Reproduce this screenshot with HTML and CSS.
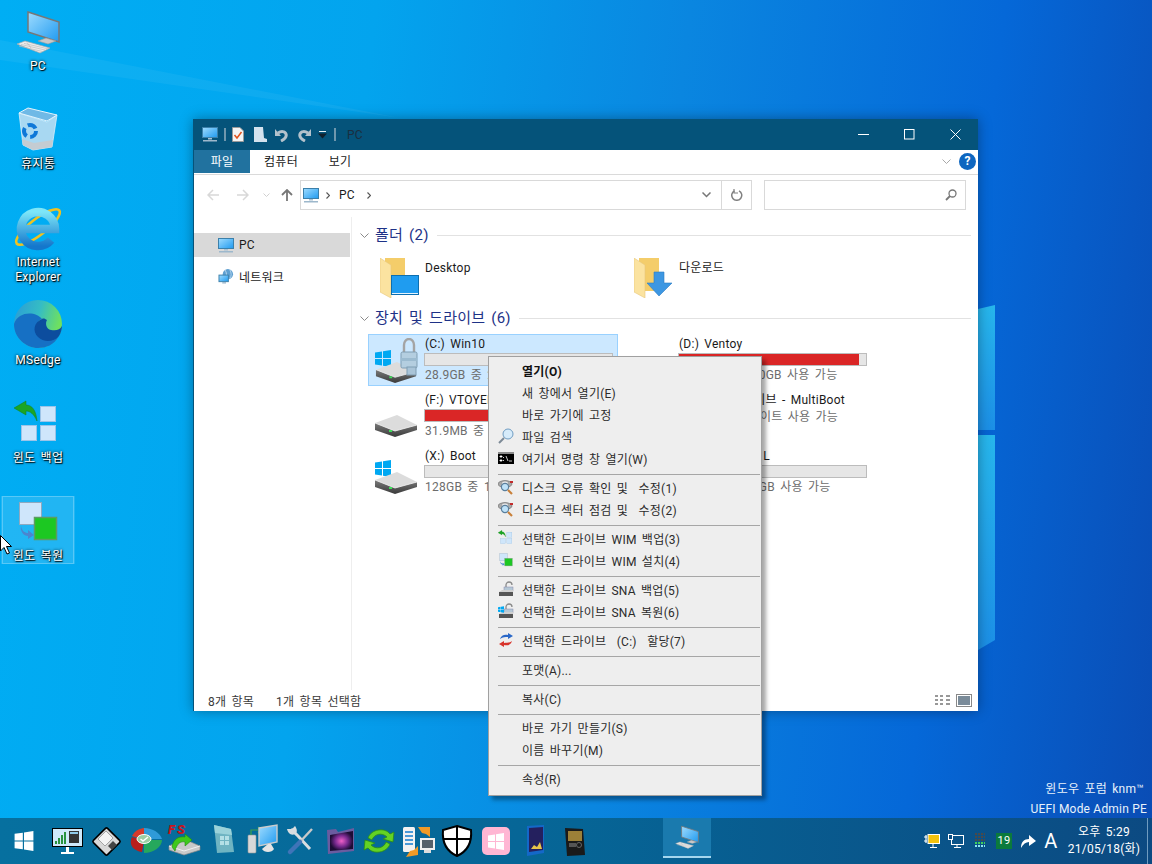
FILE: index.html
```html
<!DOCTYPE html>
<html lang="ko">
<head>
	<meta charset="UTF-8">
	<title>PC</title>
	<link rel="stylesheet" href="styles.css">
</head>
<body>
<!-- shared icons -->
<svg class="defs" aria-hidden="true">
	<defs>
		<linearGradient id="gScreen" x1="0" y1="0" x2="1" y2="1"><stop offset="0" stop-color="#9fdcff"/><stop offset="1" stop-color="#1f9af0"/></linearGradient>
		<linearGradient id="gPane" x1="0" y1="0" x2="0" y2="1"><stop offset="0" stop-color="#27b6ec"/><stop offset="1" stop-color="#1c8fe6"/></linearGradient>
		<linearGradient id="gEdge" x1="0" y1="0" x2="1" y2="0.3"><stop offset="0" stop-color="#2a9ad8"/><stop offset=".55" stop-color="#35bdc4"/><stop offset="1" stop-color="#6fe05f"/></linearGradient>
		<linearGradient id="gIe" x1="0" y1="0" x2="0" y2="1"><stop offset="0" stop-color="#7de6f8"/><stop offset="1" stop-color="#1477cc"/></linearGradient>
		<linearGradient id="gFront" x1="0" y1="0" x2="0" y2="1"><stop offset="0" stop-color="#7a7a7a"/><stop offset="1" stop-color="#3a3a3a"/></linearGradient>
		<radialGradient id="gPurple"><stop offset="0" stop-color="#f060c8"/><stop offset=".55" stop-color="#7a2a90"/><stop offset="1" stop-color="#1c0c34"/></radialGradient>
		<symbol id="i-monitor" viewBox="0 0 16 15">
			<rect x=".5" y=".5" width="15" height="10" fill="url(#gScreen)" stroke="#3c80aa"/>
			<rect x="6" y="11" width="4" height="1.5" fill="#a9c2d4"/>
			<rect x="1" y="13" width="14" height="1.5" fill="#9db8cc"/>
		</symbol>
		<symbol id="i-pc3d" viewBox="0 0 48 48">
			<path d="M14 4L45 14V34L14 24Z" fill="url(#gScreen)" stroke="#777" stroke-width="1.5"/>
			<path d="M24 33L32 30L42 33L34 36Z" fill="#c9c9c9" stroke="#9a9a9a" stroke-width=".6"/>
			<path d="M3 36L11 33L36 40L26 45Z" fill="#ececec" stroke="#a8a8a8" stroke-width=".7"/>
			<path d="M7 36.5L31 42M10 35.4L34 40.8M5 38L28 43.4M13 34.6L17 40" stroke="#bbb" stroke-width=".7" fill="none"/>
		</symbol>
		<symbol id="i-backup" viewBox="0 0 48 48">
			<rect x="26.5" y="6.5" width="15" height="15" fill="#cfe6fb" stroke="#9cc4e8"/>
			<rect x="7.5" y="25.5" width="15" height="15" fill="#cfe6fb" stroke="#9cc4e8"/>
			<rect x="26.5" y="25.5" width="15" height="15" fill="#cfe6fb" stroke="#9cc4e8"/>
			<path d="M0 8L12 1V5C18 5 22 10 23 21C20 14 16 11 12 11V15Z" fill="#1ba524" stroke="#12801a" stroke-width=".5"/>
		</symbol>
		<symbol id="i-restore" viewBox="0 0 48 48">
			<rect x="5.5" y="4.5" width="22" height="22" fill="#cfe6fb" stroke="#8fa9c0"/>
			<rect x="20.5" y="19.5" width="22" height="22" fill="#1cc822" stroke="#5c9c62" stroke-width="1.5"/>
			<path d="M7 28C8 33 11 35 14 35V32L20 37L14 41V38C10 38 6 34 7 28Z" fill="#4a86d0"/>
		</symbol>
		<symbol id="i-drive" viewBox="0 0 42 22">
			<path d="M0 8L22 0L42 10L20 16Z" fill="#dcdcdc"/>
			<path d="M0 8L20 16L42 10V15L20 22L0 15Z" fill="url(#gFront)"/>
			<path d="M0 8L20 16L42 10" fill="none" stroke="#f2f2f2" stroke-width=".8"/>
			<rect x="14" y="15" width="3" height="2" fill="#3fdc5a"/>
		</symbol>
		<symbol id="i-win" viewBox="0 0 16 17">
			<path d="M0 2.4L7 1.4V8H0ZM8 1.2L16 0V8H8ZM0 9H7V15.6L0 14.6ZM8 9H16V17L8 15.8Z"/>
		</symbol>
		<symbol id="i-lock" viewBox="0 0 18 38">
			<path d="M4 16V7A5 6 0 0 1 14 7V16" fill="none" stroke="#a4a4a4" stroke-width="2.4"/>
			<rect x="1" y="14" width="16" height="16" rx="1.5" fill="#b4cee0" stroke="#7f9db3"/>
			<rect x="1" y="20" width="16" height="3" fill="#9cbbd0"/>
			<rect x="7" y="29" width="9" height="8" fill="#a9c4d8" stroke="#7f9db3"/>
		</symbol>
		<symbol id="i-folder" viewBox="0 0 40 40">
			<path d="M5 0H25V33H5Z" fill="#f4cd6a"/>
			<path d="M0 0L11 7V40L0 34Z" fill="#fbe3a0" stroke="#e7c77c" stroke-width=".6"/>
		</symbol>
		<symbol id="i-check" viewBox="0 0 16 16">
			<ellipse cx="7" cy="5" rx="7" ry="3.4" fill="#a9a9a9" stroke="#666" stroke-width=".6"/>
			<ellipse cx="7" cy="4" rx="3.4" ry="2" fill="#ececec" stroke="#777" stroke-width=".5"/>
			<rect x="12" y="2" width="3" height="2" fill="#c22c2c"/>
			<circle cx="7" cy="8" r="3.6" fill="#bfe2f8" stroke="#5a7f9d" stroke-width="1.2"/>
			<path d="M10 11L14 15" stroke="#c9803a" stroke-width="2.2"/>
		</symbol>
		<symbol id="i-padlock" viewBox="0 0 16 16">
			<path d="M8 7V4A3 3 0 0 1 14 4" fill="none" stroke="#8a8a8a" stroke-width="1.3"/>
			<rect x="6" y="6" width="9" height="4" fill="#b5c8d6" stroke="#88a" stroke-width=".5"/>
			<path d="M1 11H15V15H1Z" fill="#555"/>
			<path d="M1 11L4 9H15V11Z" fill="#cfcfcf"/>
		</symbol>
	</defs>
</svg>

<div class="desktop">
	<div class="workarea">
		<svg class="wallpaper" viewBox="0 0 1152 818" aria-hidden="true">
			<path d="M0 40L400 118L0 60Z" fill="#fff" opacity=".05"/>
			<path d="M978 309L995 305V430H978Z" fill="url(#gPane)"/>
			<path d="M978 435H995V640L978 650Z" fill="url(#gPane)"/>
		</svg>

		<div class="icons">
			<div class="dicon">
				<svg class="dicon-img"><use href="#i-pc3d"/></svg>
				<div class="dicon-label">PC</div>
			</div>
			<div class="dicon">
				<svg class="dicon-img" viewBox="0 0 48 48">
					<path d="M5 7L9 39L19 44L38 41L43 9L33 16Z" fill="#a8d8f2" stroke="#d8eefb" stroke-width=".8"/>
					<path d="M7.800 33L9 39L19 44L38 41L39 34L20 37Z" fill="#c4ccd2"/>
					<path d="M5 7L14 2L43 9L33 15Z" fill="#6fb9e6" stroke="#e4f4fd" stroke-width="1"/>
					<circle cx="16" cy="25" r="6" fill="none" stroke="#0e78d8" stroke-width="4" stroke-dasharray="9 3.600"/>
				</svg>
				<div class="dicon-label">휴지통</div>
			</div>
			<div class="dicon">
				<svg class="dicon-img" viewBox="0 0 48 48">
					<ellipse cx="24" cy="23" rx="27" ry="8" transform="rotate(-38 24 23)" fill="none" stroke="#f0c220" stroke-width="2.600"/>
					<path d="M7 25H41A17 17 0 1 0 37 36" fill="none" stroke="url(#gIe)" stroke-width="8.500"/>
				</svg>
				<div class="dicon-label">Internet Explorer</div>
			</div>
			<div class="dicon">
				<svg class="dicon-img" viewBox="0 0 48 48">
					<circle cx="24" cy="22" r="24" fill="url(#gEdge)"/>
					<path d="M0 22C0 36 12 46 24 46C32 46 40 43 45 34C40 37 30 37 25 32C20 27 22 19 28 17C22 9 4 9 0 22Z" fill="#1670c4"/>
					<path d="M28 17C20 20 18 29 24 35C30 41 40 40 45 34C47 31 48 26 48 24C46 28 42 29 37 28C32 27 31 21 33 18C31 17 30 16 28 17Z" fill="#0c4d9e"/>
				</svg>
				<div class="dicon-label">MSedge</div>
			</div>
			<div class="dicon">
				<svg class="dicon-img"><use href="#i-backup"/></svg>
				<div class="dicon-label">윈도 백업</div>
			</div>
			<div class="dicon dicon-sel">
				<svg class="dicon-img"><use href="#i-restore"/></svg>
				<div class="dicon-label">윈도 복원</div>
			</div>
		</div>

		<div class="watermark">
			<div class="wm-top">윈도우 포럼 knm™</div>
			<div class="wm-bottom">UEFI Mode Admin PE</div>
		</div>

		<div class="window">
			<div class="titlebar">
				<svg class="qa qa-pc"><use href="#i-monitor"/></svg>
				<span class="qa-sep qa-sep1"></span>
				<svg class="qa qa-doc" viewBox="0 0 12 15">
					<path d="M.5.5H8L11.500 4V14.500H.5Z" fill="#f4f4f4" stroke="#999"/>
					<path d="M2.500 8L5 11L9.500 5" fill="none" stroke="#e0521c" stroke-width="1.5"/>
				</svg>
				<svg class="qa qa-page" viewBox="0 0 13 15">
					<path d="M0 0H9L10 11L13 12V15H0Z" fill="#d4e2ee"/>
				</svg>
				<svg class="qa qa-undo" viewBox="0 0 13 14">
					<path d="M6 13C10 11 12 9 11 6C10 3 6 3 3 5" fill="none" stroke="#b4c2cc" stroke-width="3"/>
					<path d="M0 1V8H6Z" fill="#b4c2cc"/>
				</svg>
				<svg class="qa qa-redo" viewBox="0 0 13 14">
					<path d="M7 13C3 11 1 9 2 6C3 3 7 3 10 5" fill="none" stroke="#b4c2cc" stroke-width="3"/>
					<path d="M13 1V8H7Z" fill="#b4c2cc"/>
				</svg>
				<svg class="qa qa-drop" viewBox="0 0 9 8">
					<rect x="1" y="0" width="7" height="1" fill="#e8eef2"/>
					<path d="M0 2.500H9L4.500 7.500Z" fill="#10202c"/>
				</svg>
				<span class="qa-sep qa-sep2"></span>
				<span class="title-text">PC</span>
				<div class="winbtns">
					<span class="winbtn">
						<svg width="11" height="11" viewBox="0 0 11 11"><path d="M0 5.500H11" stroke="#fff"/></svg>
					</span>
					<span class="winbtn">
						<svg width="11" height="11" viewBox="0 0 11 11"><rect x=".5" y=".5" width="9.500" height="9.500" fill="none" stroke="#fff"/></svg>
					</span>
					<span class="winbtn">
						<svg width="11" height="11" viewBox="0 0 11 11"><path d="M.5.5L10.500 10.500M10.500.5L.5 10.500" stroke="#fff"/></svg>
					</span>
				</div>
			</div>

			<div class="ribbon">
				<span class="tab tab-file">파일</span>
				<span class="tab">컴퓨터</span>
				<span class="tab">보기</span>
				<svg class="rib-chev" viewBox="0 0 9 5"><path d="M.5.5L4.500 4.500L8.500.5" fill="none" stroke="#a8a8a8"/></svg>
				<span class="help">?</span>
			</div>

			<div class="addressrow">
				<svg class="nav-arrow" viewBox="0 0 12 12"><path d="M12 6H1M6 1L1 6L6 11" fill="none" stroke="#d8d8d8" stroke-width="1.500"/></svg>
				<svg class="nav-arrow nav-fwd" viewBox="0 0 12 12"><path d="M0 6H11M6 1L11 6L6 11" fill="none" stroke="#d8d8d8" stroke-width="1.500"/></svg>
				<svg class="nav-drop" viewBox="0 0 7 4"><path d="M.5.5L3.500 3.500L6.500.5" fill="none" stroke="#d0d0d0"/></svg>
				<svg class="nav-arrow nav-up" viewBox="0 0 12 12"><path d="M6 12V1M1 6L6 1L11 6" fill="none" stroke="#777" stroke-width="1.800"/></svg>
				<div class="addrbox">
					<svg class="addr-pc"><use href="#i-monitor"/></svg>
					<svg class="crumb" viewBox="0 0 4 7"><path d="M.5.5L3.500 3.500L.5 6.500" fill="none" stroke="#555" stroke-width="1.200"/></svg>
					<span class="addr-text">PC</span>
					<svg class="crumb" viewBox="0 0 4 7"><path d="M.5.5L3.500 3.500L.5 6.500" fill="none" stroke="#555" stroke-width="1.200"/></svg>
					<svg class="addr-drop" viewBox="0 0 9 6"><path d="M.5.5L4.500 4.500L8.500.5" fill="none" stroke="#777" stroke-width="1.500"/></svg>
					<span class="addr-refresh">
						<svg width="12" height="12" viewBox="0 0 12 12"><path d="M3.500 1.800A5 5 0 1 0 8 1.800" fill="none" stroke="#808080" stroke-width="1.500"/><path d="M3 0V4H7" fill="none" stroke="#808080" stroke-width="1.200"/></svg>
					</span>
				</div>
				<div class="searchbox">
					<svg width="12" height="12" viewBox="0 0 12 12"><circle cx="7.500" cy="4.500" r="3.500" fill="none" stroke="#777" stroke-width="1.300"/><path d="M5 7L1 11" stroke="#777" stroke-width="1.800"/></svg>
				</div>
			</div>

			<div class="main">
				<div class="navpane">
					<div class="nav-row nav-sel">
						<svg class="nav-icon"><use href="#i-monitor"/></svg>
						<span>PC</span>
					</div>
					<div class="nav-row nav-net">
						<svg class="nav-icon" viewBox="0 0 16 16">
							<circle cx="10" cy="5.500" r="5.500" fill="#5e9fd0"/>
							<path d="M7 1C9 4 9 8 7 10M12 .5C14 4 14 8 12 10" fill="none" stroke="#cfe6f7" stroke-width=".8"/>
							<rect x=".5" y="6.500" width="10" height="7" fill="url(#gScreen)" stroke="#3c80aa"/>
							<rect x="4" y="14" width="4" height="1.500" fill="#9db8cc"/>
						</svg>
						<span>네트워크</span>
					</div>
				</div>

				<div class="content">
					<div class="sec-head">
						<svg class="sec-chev" viewBox="0 0 9 5"><path d="M.5.5L4.500 4.500L8.500.5" fill="none" stroke="#8a8a8a"/></svg>
						<span class="sec-title">폴더 (2)</span>
						<span class="sec-line"></span>
					</div>
					<div class="folders">
						<div class="tile tile-folder">
							<svg class="folder-img" viewBox="0 0 40 40">
								<use href="#i-folder" width="40" height="40"/>
								<rect x="11.500" y="17.500" width="27" height="19" fill="#1f9cf0" stroke="#0d6fb0"/>
								<rect x="12" y="35" width="26" height="1" fill="#e7f4fd"/>
							</svg>
							<span class="folder-name">Desktop</span>
						</div>
						<div class="tile tile-folder">
							<svg class="folder-img" viewBox="0 0 40 40">
								<use href="#i-folder" width="40" height="40"/>
								<path d="M20 14H30V25H38L25 38L13 25H20Z" fill="#3d97e2" stroke="#2c7cc4" stroke-width=".6"/>
							</svg>
							<span class="folder-name">다운로드</span>
						</div>
					</div>

					<div class="sec-head">
						<svg class="sec-chev" viewBox="0 0 9 5"><path d="M.5.5L4.500 4.500L8.500.5" fill="none" stroke="#8a8a8a"/></svg>
						<span class="sec-title">장치 및 드라이브 (6)</span>
						<span class="sec-line"></span>
					</div>
					<div class="drives">
						<div class="tile tile-drive tile-sel">
							<svg class="drive-img" viewBox="0 0 48 50">
								<use href="#i-win" x="3" y="15" width="16" height="17" fill="#00a8f2"/>
								<use href="#i-drive" x="3" y="27" width="42" height="21"/>
								<use href="#i-lock" x="28" y="3" width="18" height="38"/>
							</svg>
							<div class="drive-info">
								<div class="drive-name">(C:) Win10</div>
								<div class="bar"></div>
								<div class="drive-sub">28.9GB 중 27.5GB 사용 가능</div>
							</div>
						</div>
						<div class="tile tile-drive">
							<svg class="drive-img" viewBox="0 0 48 50"></svg>
							<div class="drive-info">
								<div class="drive-name">(D:) Ventoy</div>
								<div class="bar"><div class="bar-fill" style="width:96.500%"></div></div>
								<div class="drive-sub">58.8GB 중 1.80GB 사용 가능</div>
							</div>
						</div>
						<div class="tile tile-drive">
							<svg class="drive-img" viewBox="0 0 48 50">
								<use href="#i-drive" x="3" y="24" width="42" height="22"/>
							</svg>
							<div class="drive-info">
								<div class="drive-name">(F:) VTOYEFI</div>
								<div class="bar"><div class="bar-fill" style="width:96%"></div></div>
								<div class="drive-sub">31.9MB 중 1.20MB 사용 가능</div>
							</div>
						</div>
						<div class="tile tile-drive">
							<svg class="drive-img" viewBox="0 0 48 50"></svg>
							<div class="drive-info">
								<div class="drive-name">(E:) USB 드라이브 - MultiBoot</div>
								<div class="drive-sub">0바이트 중 0바이트 사용 가능</div>
							</div>
						</div>
						<div class="tile tile-drive">
							<svg class="drive-img" viewBox="0 0 48 50">
								<use href="#i-win" x="3" y="13" width="16" height="17" fill="#00a8f2"/>
								<use href="#i-drive" x="3" y="25" width="42" height="22"/>
							</svg>
							<div class="drive-info">
								<div class="drive-name">(X:) Boot</div>
								<div class="bar"></div>
								<div class="drive-sub">128GB 중 125GB 사용 가능</div>
							</div>
						</div>
						<div class="tile tile-drive">
							<svg class="drive-img" viewBox="0 0 48 50"></svg>
							<div class="drive-info">
								<div class="drive-name">(Y:) LocalDisk L</div>
								<div class="bar"></div>
								<div class="drive-sub">116GB 중 115GB 사용 가능</div>
							</div>
						</div>
					</div>
				</div>
			</div>

			<div class="statusbar">
				<span class="st-count">8개 항목</span>
				<span>1개 항목 선택함</span>
				<svg class="st-view" viewBox="0 0 17 13"><path d="M1 2H4M1 6H4M1 10H4M6 2H9M6 6H9M6 10H9M12 2H16M12 6H16M12 10H16" stroke="#777" stroke-width="1.500"/></svg>
				<svg class="st-view st-large" viewBox="0 0 16 13"><rect x=".5" y=".5" width="15" height="12" fill="#fff" stroke="#888"/><rect x="2" y="2" width="12" height="9" fill="#7a8b99"/></svg>
			</div>
		</div>

		<div class="menu">
			<div class="mi mi-bold"><span class="mi-ic"></span>열기(O)</div>
			<div class="mi"><span class="mi-ic"></span>새 창에서 열기(E)</div>
			<div class="mi"><span class="mi-ic"></span>바로 가기에 고정</div>
			<div class="mi">
				<svg class="mi-ic" viewBox="0 0 16 16"><path d="M6 10L1 15" stroke="#7c8a96" stroke-width="2"/><circle cx="10" cy="6" r="5" fill="#d6ebfa" stroke="#6f9cc2"/></svg>
				파일 검색
			</div>
			<div class="mi">
				<svg class="mi-ic" viewBox="0 0 16 16"><rect y="2" width="16" height="12" fill="#000"/><rect y="2" width="16" height="2" fill="#8a8a8a"/><path d="M2 6H4V7H2ZM2 10H4V11H2ZM5.500 7V8M5.500 10V11M8 6L10 11M11 11H14" stroke="#fff" stroke-width=".8" fill="#fff"/></svg>
				여기서 명령 창 열기(W)
			</div>
			<div class="mi-sep"></div>
			<div class="mi"><svg class="mi-ic"><use href="#i-check"/></svg>디스크 오류 확인 및 &nbsp;수정(1)</div>
			<div class="mi"><svg class="mi-ic"><use href="#i-check"/></svg>디스크 섹터 점검 및 &nbsp;수정(2)</div>
			<div class="mi-sep"></div>
			<div class="mi"><svg class="mi-ic"><use href="#i-backup"/></svg>선택한 드라이브 WIM 백업(3)</div>
			<div class="mi"><svg class="mi-ic"><use href="#i-restore"/></svg>선택한 드라이브 WIM 설치(4)</div>
			<div class="mi-sep"></div>
			<div class="mi"><svg class="mi-ic"><use href="#i-padlock"/></svg>선택한 드라이브 SNA 백업(5)</div>
			<div class="mi">
				<svg class="mi-ic" viewBox="0 0 16 16"><use href="#i-padlock" width="16" height="16"/><use href="#i-win" x="0" y="3" width="6" height="7" fill="#00a8f2"/></svg>
				선택한 드라이브 SNA 복원(6)
			</div>
			<div class="mi-sep"></div>
			<div class="mi">
				<svg class="mi-ic" viewBox="0 0 16 16"><path d="M2 7C3 3 7 2 10 3V1L15 4L10 7V5C7 5 5 5 2 7Z" fill="#2a68c8"/><path d="M14 9C13 13 9 14 6 13V15L1 12L6 9V11C9 11 11 11 14 9Z" fill="#d8342c"/></svg>
				선택한 드라이브 &nbsp;(C:)&nbsp; 할당(7)
			</div>
			<div class="mi-sep"></div>
			<div class="mi"><span class="mi-ic"></span>포맷(A)...</div>
			<div class="mi-sep"></div>
			<div class="mi"><span class="mi-ic"></span>복사(C)</div>
			<div class="mi-sep"></div>
			<div class="mi"><span class="mi-ic"></span>바로 가기 만들기(S)</div>
			<div class="mi"><span class="mi-ic"></span>이름 바꾸기(M)</div>
			<div class="mi-sep"></div>
			<div class="mi"><span class="mi-ic"></span>속성(R)</div>
		</div>

		<svg class="cursor" viewBox="0 0 12 20"><path d="M.5.5V16L4 12.500L7 19L9.500 18L6.500 11.500H11.500Z" fill="#fff" stroke="#000"/></svg>
	</div>

	<div class="taskbar">
		<div class="tb-start"><svg class="tb-win"><use href="#i-win"/></svg></div>
		<div class="tb-item">
			<svg viewBox="0 0 32 32">
				<rect x="1.500" y="3.500" width="30" height="18" fill="#cfe9fa" stroke="#000"/>
				<path d="M5 19V16M8 19V13M11 19V10M14 19V7" stroke="#178a2c" stroke-width="1.800"/>
				<rect x="18" y="6" width="10" height="12" fill="#333"/>
				<rect x="19" y="7" width="8" height="2" fill="#8fc9e8"/>
				<rect x="15" y="22" width="3" height="5" fill="#fff"/>
				<rect x="10" y="27" width="13" height="2" fill="#fff"/>
			</svg>
		</div>
		<div class="tb-item">
			<svg viewBox="0 0 32 32">
				<rect x="6.500" y="6.500" width="20" height="20" rx="1.500" transform="rotate(45 16.500 16.500)" fill="#d8d8d8" stroke="#000" stroke-width="1.600"/>
				<path d="M8 14L16 6L23 13L15 21Z" fill="#f4f4f4" stroke="#777" stroke-width=".6"/>
				<path d="M18 21L23 16L27 20L22 25Z" fill="#444"/>
			</svg>
		</div>
		<div class="tb-item">
			<svg viewBox="0 0 32 32">
				<path d="M15 15L3 11C6 5 12 3 16 3Z" fill="#d63a2a"/>
				<path d="M15 15L3 12C-1 20 5 26 13 27Z" fill="#b81e1c"/>
				<path d="M15 14V3C24 3 31 8 33 14Z" fill="#2f9ad8"/>
				<path d="M15 15H33C33 22 24 28 15 28Z" fill="#26a85c"/>
				<ellipse cx="15" cy="14" rx="7" ry="4.500" fill="#9ccfa4" stroke="#fff"/>
				<path d="M11.500 14L14 16L19 12" fill="none" stroke="#fff" stroke-width="1.500"/>
			</svg>
		</div>
		<div class="tb-item tb-fs">
			<svg viewBox="0 0 32 32">
				<text class="fs-text" x="0" y="9">FS</text>
				<path d="M1 21L16 14L32 21V25L16 30L1 25Z" fill="#c9c9c9" stroke="#888" stroke-width=".7"/>
				<path d="M1 21L16 26L32 21" fill="none" stroke="#f0f0f0"/>
				<path d="M4 22C5 14 11 11 17 12V9L24 15L17 21V17C13 16 9 18 7 26Z" fill="#3fc81c" stroke="#1f8a10" stroke-width=".6"/>
			</svg>
		</div>
		<div class="tb-item">
			<svg viewBox="0 0 32 32">
				<path d="M7 0L24 4L27 27L10 28Z" fill="#6fb4c2"/>
				<path d="M7 0L24 4L25 10L8 8Z" fill="#9ad2da"/>
				<path d="M13 11H17V15H13ZM18 11H22V15H18ZM13 16H17V20H13ZM18 16H22V20H18Z" fill="#b4e0e6"/>
			</svg>
		</div>
		<div class="tb-item">
			<svg viewBox="0 0 32 32">
				<rect x="2" y="10" width="8" height="18" rx="1" fill="#d8d8d8" stroke="#999" stroke-width=".6"/>
				<path d="M5 10V5H12M12 2L15 5L12 8" fill="none" stroke="#3fa04a" stroke-width="1.200"/>
				<path d="M13 3L31 0V17L13 21Z" fill="url(#gScreen)" stroke="#ccc" stroke-width="1.400"/>
				<path d="M16 24L22 19L25 19L28 24C26 28 18 28 16 24Z" fill="#e4e4e4"/>
			</svg>
		</div>
		<div class="tb-item">
			<svg viewBox="0 0 32 32">
				<path d="M6 4L13 11L25 24" stroke="#d8dde0" stroke-width="3" fill="none"/>
				<path d="M2 4C3 8 6 11 10 9C13 7 12 4 10 1L7 4Z" fill="#d8dde0"/>
				<path d="M27 4L14 18" stroke="#c8c8c8" stroke-width="2.400"/>
				<path d="M15 17L5 27" stroke="#3f74b8" stroke-width="4.500" stroke-linecap="round"/>
			</svg>
		</div>
		<div class="tb-item">
			<svg viewBox="0 0 32 32">
				<path d="M3 5L12 4L14 7L30 3V26L4 29Z" fill="#6a5ca0"/>
				<path d="M6 10L29 6V24L6 26Z" fill="url(#gPurple)"/>
			</svg>
		</div>
		<div class="tb-item">
			<svg viewBox="0 0 32 32">
				<path d="M5 13C8 4 22 2 27 9L31 7L30 17L20 14L24 12C19 7 11 9 9 15Z" fill="#63d224" stroke="#2a8a18" stroke-width=".8"/>
				<path d="M27 19C24 28 10 30 5 23L1 25L2 15L12 18L8 20C13 25 21 23 23 17Z" fill="#63d224" stroke="#2a8a18" stroke-width=".8"/>
			</svg>
		</div>
		<div class="tb-item">
			<svg viewBox="0 0 32 32">
				<rect x="1" y="2" width="12" height="25" rx="1.500" fill="#f2f2f2"/>
				<path d="M3 7H11M3 11H11M3 15H11M3 19H11" stroke="#4a9ad8" stroke-width="1.800"/>
				<rect x="18" y="13" width="15" height="12" fill="#f0f0f0"/>
				<rect x="20" y="15" width="11" height="8" fill="#55606a"/>
				<rect x="22" y="25" width="7" height="3" fill="#ddd"/>
				<path d="M16 2H28V12L24 9L20 8Z" fill="#f09a26"/>
				<path d="M4 32L16 30V21L12 25L8 26Z" fill="#f09a26"/>
			</svg>
		</div>
		<div class="tb-item">
			<svg viewBox="0 0 32 32">
				<path d="M16 1L30 5C31 16 27 26 16 31C5 26 1 16 2 5Z" fill="#fff" stroke="#000" stroke-width="2"/>
				<path d="M16 2V30M2 14H30" stroke="#000" stroke-width="2"/>
			</svg>
		</div>
		<div class="tb-item">
			<svg viewBox="0 0 32 32">
				<rect x="2" y="2" width="28" height="28" rx="5" fill="#ffb6d3"/>
				<use href="#i-win" x="8" y="8" width="16" height="17" fill="#fff"/>
			</svg>
		</div>
		<div class="tb-item">
			<svg viewBox="0 0 32 32">
				<path d="M8 1L25 0V28L8 31Z" fill="#1468c8"/>
				<path d="M10 3L24 2V25L10 27Z" fill="#24205e"/>
				<path d="M12 24L15 20L18 22L21 17L23 24Z" fill="#e8c54a"/>
			</svg>
		</div>
		<div class="tb-item">
			<svg viewBox="0 0 32 32">
				<path d="M7 3L25 4L27 30L9 31Z" fill="#1a1a1a"/>
				<rect x="10" y="6" width="14" height="10" fill="#9c8038"/>
				<rect x="11" y="18" width="7" height="4" fill="#555"/>
				<circle cx="21" cy="20" r="2.500" fill="none" stroke="#666"/>
			</svg>
		</div>
		<div class="tb-task"><svg class="tb-task-ic"><use href="#i-pc3d"/></svg></div>

		<div class="tray">
			<svg class="tray-ic" viewBox="0 0 16 16">
				<path d="M0 4H3M0 8H3M2 2V10" stroke="#fff" stroke-width="1.200"/>
				<rect x="4" y="1.500" width="11.500" height="9" fill="#f4c20d" stroke="#fff"/>
				<path d="M9 11V14M6 14.500H13" stroke="#fff"/>
			</svg>
			<svg class="tray-ic" viewBox="0 0 16 16">
				<rect x="3.500" y="2.500" width="12" height="9" fill="none" stroke="#fff"/>
				<rect x=".5" y="1.500" width="4" height="5" fill="#0c4e84" stroke="#fff"/>
				<path d="M9 12V14M6 14.500H13" stroke="#fff"/>
			</svg>
			<svg class="tray-ic" viewBox="0 0 16 16">
				<path d="M3 1H13M3 4H13M3 7H13" stroke="#4a4a4a" stroke-width="2" stroke-dasharray="2 1"/>
				<path d="M3 10H13" stroke="#3fd05a" stroke-width="2" stroke-dasharray="2 1"/>
				<path d="M3 13H13" stroke="#8fe6f0" stroke-width="2" stroke-dasharray="2 1"/>
			</svg>
			<span class="tray-num">19</span>
			<svg class="tray-ic" viewBox="0 0 16 16"><path d="M1 15C1 9 4 6 9 6V2L16 8L9 13V9C6 9 3 11 1 15Z" fill="#fff"/></svg>
			<span class="tray-a">A</span>
			<div class="clock">
				<div>오후 5:29</div>
				<div>21/05/18(화)</div>
			</div>
		</div>
	</div>
</div>
</body>
</html>
```

FILE: styles.css
```css
*{
	margin: 0;
	padding: 0;
	box-sizing: border-box;
}
html,body{
	width: 1152px;
	height: 864px;
	overflow: hidden;
}
body{
	font-family: Roboto, "Noto Sans CJK KR", sans-serif;
	font-size: 12px;
	letter-spacing: .25px;
	word-spacing: 2px;
	color: #1a1a1a;
}
.defs{
	position: absolute;
	width: 0;
	height: 0;
}
.desktop{
	display: flex;
	flex-direction: column;
	width: 1152px;
	height: 864px;
	background: linear-gradient(97deg, #00aef4 0%, #03a4ee 30%, #0a86e0 55%, #0568d8 80%, #0a4cb4 100%);
}
.workarea{
	position: relative;
	flex: 1;
}
.wallpaper{
	position: absolute;
	left: 0;
	top: 0;
	width: 100%;
	height: 100%;
}

/* desktop icons */
.icons{
	position: relative;
	display: flex;
	flex-direction: column;
	gap: 30px;
	width: 74px;
	margin-left: 1px;
	padding-top: 6px;
}
.dicon{
	height: 68px;
	padding-top: 2px;
	border: 1px solid transparent;
	border-width: 0 1px;
	text-align: center;
}
.dicon-sel{
	background: rgba(255,255,255,.13);
	box-shadow: inset 0 0 0 1px rgba(255,255,255,.25);
}
.dicon-img{
	display: block;
	width: 48px;
	height: 48px;
	margin-left: 12px;
	overflow: visible;
}
.dicon-label{
	margin-top: 3px;
	line-height: 15px;
	color: #fff;
	text-shadow: 1px 1px 1px #000, 0 0 3px #000;
}

.watermark{
	position: absolute;
	right: 5px;
	bottom: -1px;
	line-height: 20px;
	text-align: right;
	color: #e8f2fb;
}
.wm-top{
	padding-right: 3px;
}
.wm-bottom{
	letter-spacing: .2px;
	word-spacing: 0;
}

/* explorer window */
.window{
	position: absolute;
	left: 193px;
	top: 119px;
	display: flex;
	flex-direction: column;
	width: 785px;
	height: 592px;
	background: #fff;
	box-shadow: 0 0 12px rgba(0,0,0,.35);
	border-left: 1px solid #05537a;
}
.titlebar{
	display: flex;
	align-items: center;
	flex: none;
	height: 31px;
	padding-left: 8px;
	background: #05537a;
}
.qa{
	display: block;
	flex: none;
}
.qa-pc{width: 16px;height: 15px;}
.qa-doc{width: 12px;height: 15px;margin-left: 6px;}
.qa-page{width: 13px;height: 15px;margin-left: 10px;}
.qa-undo{width: 13px;height: 14px;margin-left: 8px;}
.qa-redo{width: 13px;height: 14px;margin-left: 10px;}
.qa-drop{width: 9px;height: 8px;margin-left: 7px;}
.qa-sep{
	flex: none;
	width: 2px;
	height: 13px;
	background: #6f97ad;
}
.qa-sep1{margin-left: 6px;}
.qa-sep2{margin-left: 7px;}
.title-text{
	margin-left: 11px;
	color: #1b2f40;
}
.winbtns{
	display: flex;
	margin-left: auto;
}
.winbtn{
	display: flex;
	align-items: center;
	justify-content: center;
	width: 46px;
	height: 31px;
}

.ribbon{
	display: flex;
	align-items: center;
	flex: none;
	height: 25px;
	border-bottom: 1px solid #dadada;
	padding-bottom: 1px;
}
.tab{
	width: 60px;
	padding-top: 1px;
	line-height: 22px;
	text-align: center;
	margin-right: -1px;
}
.tab-file{
	width: 56px;
	margin-right: 1px;
	background: #21729f;
	color: #fff;
}
.rib-chev{
	width: 9px;
	height: 5px;
	margin-left: auto;
}
.help{
	width: 17px;
	height: 17px;
	margin: 0 2px 0 8px;
	border-radius: 50%;
	background: #0e66c0;
	color: #fff;
	font-weight: bold;
	line-height: 17px;
	text-align: center;
}

.addressrow{
	display: flex;
	flex: none;
	align-items: center;
	height: 42px;
	padding: 5px 12px 7px 13px;
}
.nav-arrow{
	flex: none;
	width: 12px;
	height: 12px;
}
.nav-fwd{margin-left: 18px;}
.nav-drop{
	flex: none;
	width: 7px;
	height: 4px;
	margin-left: 14px;
}
.nav-up{margin-left: 11px;}
.addrbox{
	display: flex;
	align-items: center;
	width: 452px;
	height: 30px;
	margin-left: 7px;
	padding-left: 2px;
	border: 1px solid #d9d9d9;
}
.addr-pc{
	width: 16px;
	height: 15px;
}
.crumb{
	width: 4px;
	height: 7px;
	margin-left: 7px;
}
.addr-text{
	margin: 0 5px 0 9px;
}
.addr-drop{
	width: 9px;
	height: 6px;
	margin-left: auto;
	margin-right: 10px;
}
.addr-refresh{
	display: flex;
	align-items: center;
	justify-content: center;
	width: 30px;
	height: 28px;
	border-left: 1px solid #d9d9d9;
}
.searchbox{
	display: flex;
	align-items: center;
	justify-content: flex-end;
	width: 202px;
	height: 30px;
	margin-left: 12px;
	padding-right: 8px;
	border: 1px solid #d9d9d9;
}

.main{
	display: flex;
	flex: 1;
	min-height: 0;
}
.navpane{
	flex: none;
	width: 158px;
	padding-top: 16px;
	border-right: 1px solid #eee;
}
.nav-row{
	display: flex;
	align-items: center;
	width: 156px;
	height: 24px;
	padding-left: 24px;
}
.nav-sel{
	background: #d9d9d9;
}
.nav-net{
	margin-top: 7px;
}
.nav-icon{
	flex: none;
	width: 16px;
	height: 15px;
	margin-right: 5px;
}

.content{
	flex: 1;
	padding: 9px 7px 0 0;
}
.sec-head{
	display: flex;
	align-items: center;
	height: 18px;
	padding-left: 8px;
	font-size: 15px;
	color: #1e3287;
}
.sec-chev{
	flex: none;
	width: 9px;
	height: 5px;
	margin-right: 6px;
}
.sec-title{
	padding-bottom: 3px;
}
.sec-line{
	flex: 1;
	height: 1px;
	margin-left: 8px;
	background: #e2e2e2;
}
.folders,.drives{
	display: grid;
	grid-template-columns: 250px 250px;
	column-gap: 4px;
	margin-left: 16px;
}
.folders{
	margin-top: 6px;
	margin-bottom: 7px;
}
.drives{
	margin-top: 7px;
	row-gap: 4px;
}
.tile{
	display: flex;
	height: 52px;
	border: 1px solid transparent;
}
.tile-sel{
	background: #cce8ff;
	border-color: #99d1ff;
}
.tile-folder{
	padding-left: 11px;
}
.folder-img{
	flex: none;
	width: 40px;
	height: 40px;
	margin-top: 7px;
}
.folder-name{
	margin: 9px 0 0 5px;
	line-height: 16px;
}
.tile-drive{
	padding-left: 3px;
}
.drive-img{
	flex: none;
	width: 48px;
	height: 50px;
}
.drive-info{
	width: 189px;
	margin-left: 4px;
	white-space: nowrap;
}
.drive-name{
	padding-top: 1px;
	line-height: 16px;
	margin-left: 1px;
}
.drive-sub{
	margin-top: 1px;
	line-height: 16px;
	margin-left: 1px;
	color: #6d6d6d;
}
.bar{
	height: 13px;
	margin-top: 1px;
	border: 1px solid #bcbcbc;
	background: #e6e6e6;
}
.bar-fill{
	height: 100%;
	background: #da2626;
}

.statusbar{
	display: flex;
	align-items: center;
	flex: none;
	height: 21px;
	padding: 0 6px 0 14px;
	color: #3a3a3a;
}
.st-count{
	margin-right: 22px;
}
.st-view{
	width: 17px;
	height: 13px;
	margin-left: auto;
}
.st-large{
	width: 16px;
	margin-left: 5px;
}

/* context menu */
.menu{
	position: absolute;
	left: 488px;
	top: 356px;
	width: 274px;
	height: 440px;
	padding: 3px 1px 0 9px;
	background: #eee;
	border: 1px solid #a0a0a0;
	box-shadow: 4px 4px 4px rgba(0,0,0,.35);
	color: #2b2b2b;
}
.mi{
	display: flex;
	align-items: center;
	height: 22px;
	padding-bottom: 2px;
	white-space: nowrap;
}
.mi-bold{
	font-weight: bold;
	color: #111;
}
.mi-ic{
	flex: none;
	width: 16px;
	height: 16px;
	margin-right: 8px;
}
.mi-sep{
	height: 1px;
	margin: 4px 0 2px;
	background: #a6a6a6;
}
.cursor{
	position: absolute;
	left: 0;
	top: 535px;
	width: 12px;
	height: 20px;
}

/* taskbar */
.taskbar{
	display: flex;
	flex: none;
	height: 46px;
	background: linear-gradient(90deg, #06709f 0%, #066596 50%, #0c4a82 100%);
	color: #fff;
}
.tb-start{
	display: flex;
	align-items: center;
	justify-content: center;
	flex: none;
	width: 47px;
}
.tb-win{
	width: 20px;
	height: 20px;
	fill: #fff;
}
.tb-item{
	display: flex;
	align-items: center;
	justify-content: center;
	flex: none;
	width: 39px;
}
.tb-item svg{
	width: 32px;
	height: 32px;
	overflow: visible;
}
.fs-text{
	font-size: 13px;
	font-weight: 900;
	font-style: italic;
	letter-spacing: 2px;
	fill: #c8141c;
}
.tb-task{
	display: flex;
	align-items: center;
	justify-content: center;
	flex: none;
	width: 48px;
	height: 40px;
	margin-left: 70px;
	background: #1a7aae;
	border-bottom: 2px solid #a5d6ee;
}
.tb-task-ic{
	width: 26px;
	height: 26px;
}
.tray{
	display: flex;
	align-items: center;
	gap: 8px;
	margin-left: auto;
	padding-right: 4px;
}
.tray-ic{
	flex: none;
	width: 16px;
	height: 16px;
}
.tray-num{
	flex: none;
	width: 16px;
	height: 16px;
	background: #0b7a3c;
	font-size: 11px;
	line-height: 16px;
	text-align: center;
}
.tray-a{
	flex: none;
	width: 14px;
	font-size: 20px;
	line-height: 24px;
	text-align: center;
}
.clock{
	width: 87px;
	height: 46px;
	margin-left: -5px;
	padding-top: 6px;
	border-right: 1px solid #6f9cc0;
	line-height: 17px;
	text-align: center;
}
```
